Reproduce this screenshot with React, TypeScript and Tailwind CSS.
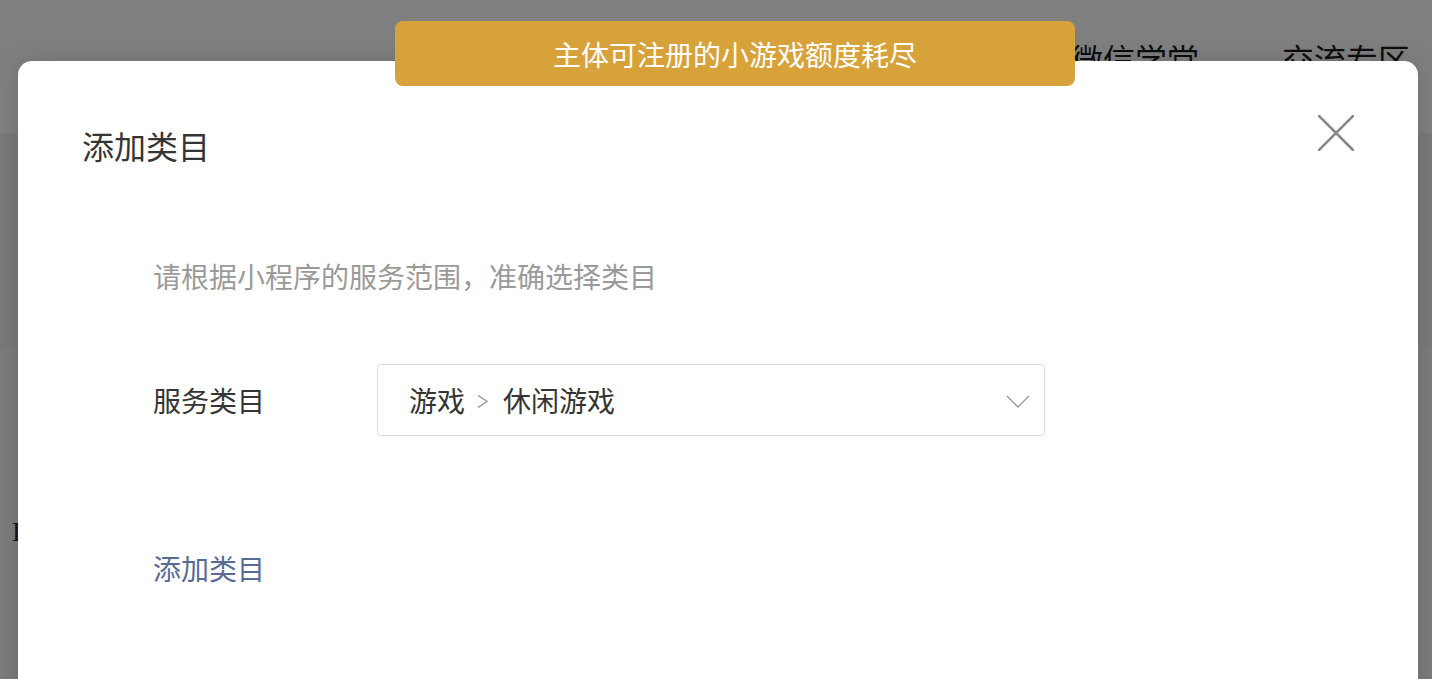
const cjk = { fontFamily: '"Noto Sans CJK SC", "Noto Sans", sans-serif' };

export default function App() {
  return (
    <div className="relative w-[1432px] h-[679px] overflow-hidden bg-white" style={cjk}>
      {/* page behind the mask */}
      <div className="h-[133px] bg-white flex justify-end items-start pt-[36px] pr-[22px] gap-[83px] text-[32px] leading-[44px] text-[#1a1a1a]">
        <span>微信学堂</span>
        <span>交流专区</span>
      </div>
      <div className="h-[215px] bg-[#f2f2f2]" />
      <div className="h-[331px] bg-[#f7f7f7] pt-[168px] pl-[12px]">
        <span className="text-[28px] leading-[32px] text-[#2a2a55]" style={{ fontFamily: '"Liberation Serif", serif' }}>E</span>
      </div>

      {/* mask */}
      <div className="absolute inset-0 bg-black/50" />

      {/* dialog */}
      <div className="absolute left-[18px] top-[61px] w-[1400px] h-[680px] bg-white rounded-[14px] shadow-[0_0_24px_rgba(0,0,0,0.12)]">
        <div className="pt-16 pl-16 text-[32px] leading-[40px] text-[#353535]">添加类目</div>
        <button className="absolute right-[64px] top-[54px] w-9 h-9 cursor-pointer">
          <svg viewBox="0 0 36 36" className="w-9 h-9" fill="none" stroke="#888" strokeWidth="2.6" strokeLinecap="square">
            <path d="M1 1L35 35M35 1L1 35" />
          </svg>
        </button>

        <div className="pl-[135px]">
          <div className="mt-[91px] text-[28px] leading-[40px] text-[#9a9a9a]">请根据小程序的服务范围，准确选择类目</div>

          <div className="mt-[68px] flex items-center">
            <div className="w-[224px] text-[28px] leading-[40px] text-[#353535]">服务类目</div>
            <div className="w-[668px] h-[72px] border border-[#dcdcdc] rounded-[4px] flex items-center pl-[31px] pr-[14px] text-[28px] text-[#353535]">
              <span className="leading-[40px]">游戏</span>
              <svg width="11" height="13" viewBox="0 0 11 13" fill="none" stroke="#9a9a9a" strokeWidth="1.4" className="ml-[12px] mr-[15px] mt-[2px]">
                <path d="M1 0.5L10 6.5L1 12.5" />
              </svg>
              <span className="leading-[40px]">休闲游戏</span>
              <svg width="24" height="13" viewBox="0 0 24 13" fill="none" stroke="#9a9a9a" strokeWidth="1.4" className="ml-auto mt-[2px]">
                <path d="M1 1L12 12L23 1" />
              </svg>
            </div>
          </div>

          <div className="mt-[112px] text-[28px] leading-[40px] text-[#576b95]">添加类目</div>
        </div>
      </div>

      {/* toast */}
      <div className="absolute left-[395px] top-[21px] w-[680px] h-[65px] rounded-lg bg-[#d8a23a] flex items-center justify-center text-white text-[28px] leading-[40px]">
        主体可注册的小游戏额度耗尽
      </div>
    </div>
  );
}
